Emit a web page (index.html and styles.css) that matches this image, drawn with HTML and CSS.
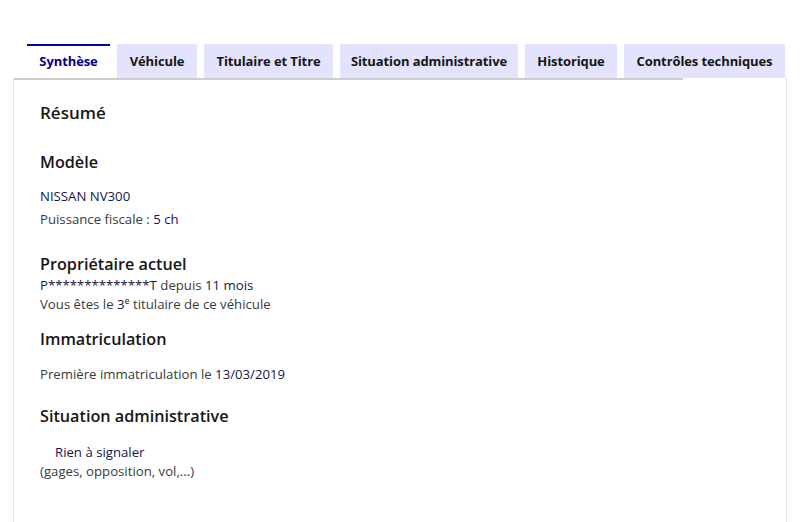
FILE: index.html
```html
<!DOCTYPE html>
<html lang="fr">
<head>
<meta charset="utf-8">
<link rel="stylesheet" href="styles.css">
</head>
<body>
<div class="page">
  <div class="tabs">
    <div class="tab active">Synthèse</div>
    <div class="tab">Véhicule</div>
    <div class="tab">Titulaire et Titre</div>
    <div class="tab">Situation administrative</div>
    <div class="tab">Historique</div>
    <div class="tab">Contrôles techniques</div>
  </div>
  <div class="panel">
    <div class="rule"></div>
    <div class="content">
      <h2 class="title">Résumé</h2>
      <h3 class="h model">Modèle</h3>
      <p class="v first">NISSAN NV300</p>
      <p class="t">Puissance fiscale : <span class="v">5 ch</span></p>
      <h3 class="h owner">Propriétaire actuel</h3>
      <p class="t tight"><span class="v">P**************T</span> depuis <span class="v">11 mois</span></p>
      <p class="t tight">Vous êtes le <span class="v">3<sup>e</sup></span> titulaire de ce véhicule</p>
      <h3 class="h immat">Immatriculation</h3>
      <p class="t first wide">Première immatriculation le <span class="v">13/03/2019</span></p>
      <h3 class="h sit">Situation administrative</h3>
      <p class="v first rien">Rien à signaler</p>
      <p class="t tight">(gages, opposition, vol,...)</p>
    </div>
  </div>
</div>
</body>
</html>
```
FILE: styles.css
```css
* { box-sizing: border-box; }
body {
  margin: 0;
  background: #fff;
  font-family: "Open Sans", "Noto Sans", sans-serif;
  color: #3a3a3a;
}
.page {
  padding-top: 44px;
  padding-left: 13px;
  width: 787px;
}
.tabs {
  display: flex;
  gap: 7px;
  padding-left: 14px;
  height: 34px;
}
.tab {
  flex: none;
  white-space: nowrap;
  background: #e3e3fd;
  height: 34px;
  padding: 0 13px;
  display: flex;
  align-items: center;
  justify-content: center;
  font-size: 13px;
  font-weight: 700;
  color: #161616;
  letter-spacing: -0.1px;
}
.tab:nth-child(1) { width: 83px; }
.tab:nth-child(2) { width: 80px; }
.tab:nth-child(3) { width: 129px; }
.tab:nth-child(4) { width: 178px; }
.tab:nth-child(5) { width: 92px; }
.tab:nth-child(6) { width: 161px; }
.tab.active {
  background: #fff;
  border-top: 2px solid #000091;
  color: #000091;
  padding-bottom: 2px;
}
.panel {
  border-left: 1px solid #e5e5e5;
  border-right: 1px solid #e5e5e5;
  height: 450px;
}
.rule {
  width: 669px;
  height: 2px;
  background: #cecece;
}
.content {
  padding: 20px 0 0 26px;
}
.title {
  margin: 0;
  font-size: 17px;
  font-weight: 600;
  color: #161616;
  line-height: 26px;
}
.h {
  margin: 22px 0 0;
  font-size: 16.2px;
  font-weight: 600;
  color: #161616;
  line-height: 24px;
}
p { margin: 0; font-size: 13.2px; line-height: 19px; }
.v { color: #161646; }
.t { margin-top: 4px; }
.first { margin-top: 13px; }
.tight { margin-top: 0; }
.model { margin-top: 24px; }
.owner { margin-top: 23px; }
.immat { margin-top: 13px; }
.wide { margin-top: 14px; }
.sit { margin-top: 20px; }
.rien { margin-top: 15px; padding-left: 15px; }
sup { font-size: 9px; line-height: 0; }
```
